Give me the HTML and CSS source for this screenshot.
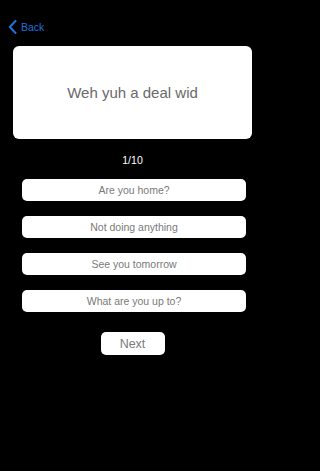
FILE: index.html
```html
<!DOCTYPE html>
<html>
<head>
<meta charset="utf-8">
<link rel="stylesheet" href="styles.css">
</head>
<body>
<div class="screen">
  <div class="nav">
    <a class="back">
      <svg class="chev" width="9" height="14" viewBox="0 0 9 14"><path d="M7.5 1 L1.8 7 L7.5 13" fill="none" stroke="#1f72dc" stroke-width="2" stroke-linecap="round" stroke-linejoin="round"/></svg>
      <span class="back-label">Back</span>
    </a>
  </div>
  <div class="card"><span class="phrase">Weh yuh a deal wid</span></div>
  <div class="counter">1/10</div>
  <div class="options">
    <div class="option">Are you home?</div>
    <div class="option">Not doing anything</div>
    <div class="option">See you tomorrow</div>
    <div class="option">What are you up to?</div>
  </div>
  <div class="next-row"><div class="next">Next</div></div>
</div>
</body>
</html>
```
FILE: styles.css
```css
html, body {
  margin: 0;
  padding: 0;
  background: #000;
}
body {
  width: 265px;
  height: 471px;
  overflow: hidden;
  font-family: "Liberation Sans", Arial, sans-serif;
}
.screen {
  display: flex;
  flex-direction: column;
}
.nav {
  padding: 20px 0 0 8px;
  height: 13px;
}
.back {
  display: flex;
  align-items: center;
  gap: 4px;
  height: 14px;
}
.chev { display: block; }
.back-label {
  color: #1f72dc;
  font-size: 10.5px;
  line-height: 14px;
}
.card {
  margin: 13px 13px 0 13px;
  height: 93px;
  background: #fff;
  border-radius: 6px;
  display: flex;
  align-items: center;
  justify-content: center;
}
.phrase {
  color: #6a6a6a;
  font-size: 15px;
}
.counter {
  margin-top: 14px;
  height: 14px;
  line-height: 14px;
  text-align: center;
  color: #fff;
  font-size: 10.5px;
}
.options {
  margin: 12px 0 0 22px;
  width: 224px;
  display: flex;
  flex-direction: column;
  gap: 15px;
}
.option {
  height: 22px;
  background: #fff;
  border-radius: 5px;
  display: flex;
  align-items: center;
  justify-content: center;
  color: #7a7a7a;
  font-size: 10.5px;
}
.next-row {
  margin-top: 20px;
  display: flex;
  justify-content: center;
}
.next {
  width: 64px;
  height: 23px;
  background: #fff;
  border-radius: 5px;
  display: flex;
  align-items: center;
  justify-content: center;
  color: #7a7a7a;
  font-size: 12.5px;
}
```
